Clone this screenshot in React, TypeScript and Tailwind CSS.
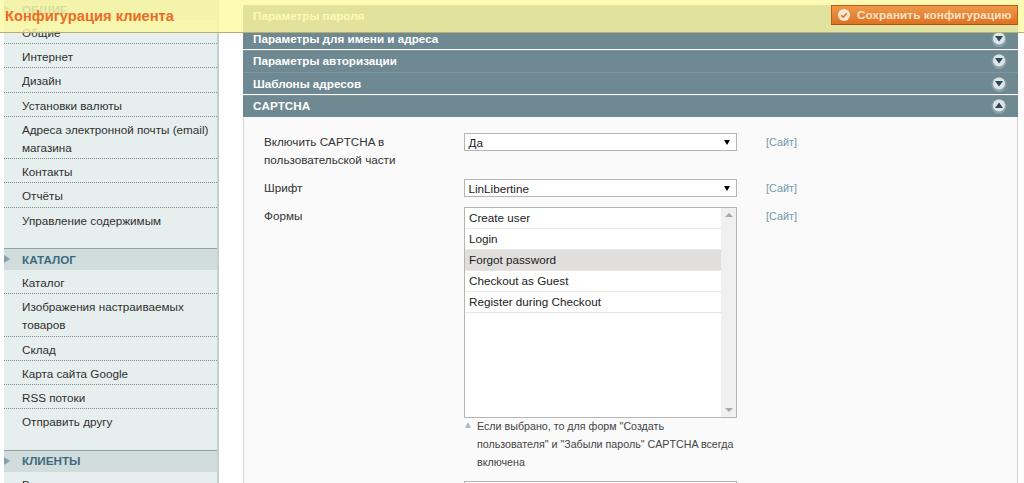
import React from "react";

const font = { fontFamily: '"Liberation Sans", Arial, sans-serif' };

function NavItem({ children, last }: { children: React.ReactNode; last?: boolean }) {
  return (
    <div className={`pl-[18px] pr-1 pt-[4px] pb-[1.25px] text-[11.7px] leading-[18px] text-[#2f2f2f] border-b ${last ? "border-transparent" : "border-dotted border-[#7f8b8b]"}`}>
      {children}
    </div>
  );
}

function NavHead({ children }: { children: React.ReactNode }) {
  return (
    <div className="h-[22px] flex items-center border-t border-[#8fa3a8] bg-[#d1dcdd] pl-[18px] relative">
      <span className="absolute left-0 top-[6px] w-0 h-0 border-y-[4.5px] border-y-transparent border-l-[6px] border-l-[#84a0a8]" />
      <span className="text-[11.7px] font-bold text-[#3e6a80]">{children}</span>
    </div>
  );
}

function Bar({ title, up }: { title: string; up?: boolean }) {
  return (
    <div className="h-[22px] mb-[0.5px] bg-[#6f8992] border-t border-[#7f96a0] flex items-center justify-between pl-[10px] pr-[11px]">
      <span className="text-[11.7px] font-bold text-white">{title}</span>
      <svg width="16" height="16" viewBox="0 0 16 16">
        <circle cx="8" cy="8.5" r="7.5" fill="#8ba0a8" />
        <circle cx="8" cy="7.5" r="6" fill="#dfe5e7" />
        {up ? <path d="M4 10 L12 10 L8 4.5 Z" fill="#264a5e" /> : <path d="M4 5 L12 5 L8 10.5 Z" fill="#264a5e" />}
      </svg>
    </div>
  );
}

function Select({ value }: { value: string }) {
  return (
    <div className="w-[273px] h-[18px] bg-white border border-[#b5b5b5] flex items-center justify-between pl-[3.5px] pr-[6px] text-[11.7px] text-[#222]">
      <span>{value}</span>
      <span className="w-0 h-0 border-x-[3.5px] border-x-transparent border-t-[5px] border-t-black" />
    </div>
  );
}

function Row({ label, scope, children, h }: { label: React.ReactNode; scope: string; children: React.ReactNode; h: string }) {
  return (
    <div className={`flex ${h}`}>
      <div className="w-[220px] pl-[20px] pr-[50px] text-[11.7px] leading-[18px] text-[#333]">{label}</div>
      <div className="w-[273px]">{children}</div>
      <div className="ml-[29px] mt-[3px] h-[12px] text-[10.8px] leading-[12px] text-[#6f98ad]">{scope}</div>
    </div>
  );
}

export default function App() {
  const opts = ["Create user", "Login", "Forgot password", "Checkout as Guest", "Register during Checkout"];
  return (
    <div style={font} className="relative w-[1024px] h-[483px] overflow-hidden bg-white flex">
      <div className="absolute left-0 top-0 z-10 w-full h-[33px] bg-[#fdf9a0]/80 border-b border-[#b8b06a] flex items-center justify-between pl-[5px] pr-[6px]">
        <span className="text-[14.7px] font-bold text-[#eb6d22]">Конфигурация клиента</span>
        <div className="h-[20px] w-[187px] flex items-center gap-[7px] pl-[6px] bg-gradient-to-b from-[#f0994a] to-[#dc7222] border border-[#c55a12] border-b-[#b24e0e] mb-[2px]">
          <svg width="12" height="12" viewBox="0 0 12 12">
            <circle cx="6" cy="6" r="6" fill="#fbe8d4" />
            <path d="M3.2 6.2 L5.2 8.2 L8.8 4.2" fill="none" stroke="#e0701a" strokeWidth="1.6" />
          </svg>
          <span className="text-[11.7px] font-bold text-[#fbe3c8] tracking-[0.1px]">Сохранить конфигурацию</span>
        </div>
      </div>

      <div className="w-[215px] ml-[4px] -mt-[1px] h-[490px] shrink-0 bg-[#e7efee] border-r-[2px] border-[#c4d1d1] overflow-hidden">
        <div className="h-[20.75px] flex items-center bg-[#d1dcdd] pl-[18px] relative">
          <span className="absolute left-0 top-[6px] w-0 h-0 border-y-[4.5px] border-y-transparent border-l-[6px] border-l-[#84a0a8]" />
          <span className="text-[11.7px] font-bold text-[#3e6a80]">ОБЩИЕ</span>
        </div>
        <NavItem>Общие</NavItem>
        <NavItem>Интернет</NavItem>
        <NavItem>Дизайн</NavItem>
        <NavItem>Установки валюты</NavItem>
        <NavItem>Адреса электронной почты (email) магазина</NavItem>
        <NavItem>Контакты</NavItem>
        <NavItem>Отчёты</NavItem>
        <NavItem last>Управление содержимым</NavItem>
        <div className="h-[16.25px]" />
        <NavHead>КАТАЛОГ</NavHead>
        <NavItem>Каталог</NavItem>
        <NavItem>Изображения настраиваемых товаров</NavItem>
        <NavItem>Склад</NavItem>
        <NavItem>Карта сайта Google</NavItem>
        <NavItem>RSS потоки</NavItem>
        <NavItem last>Отправить другу</NavItem>
        <div className="h-[16.25px]" />
        <NavHead>КЛИЕНТЫ</NavHead>
        <NavItem last>В</NavItem>
      </div>

      <div className="ml-[24px] w-[775px] pt-[4.7px] shrink-0">
        <Bar title="Параметры пароля" />
        <Bar title="Параметры для имени и адреса" />
        <Bar title="Параметры авторизации" />
        <Bar title="Шаблоны адресов" />
        <Bar title="CAPTCHA" up />
        <div className="h-[400px] bg-[#fafafa] border-x border-[#d6d6d6] pt-[16.2px]">
          <Row h="h-[46px]" label="Включить CAPTCHA в пользовательской части" scope="[Сайт]"><Select value="Да" /></Row>
          <Row h="h-[28px]" label="Шрифт" scope="[Сайт]"><Select value="LinLibertine" /></Row>
          <Row h="h-[280px]" label="Формы" scope="[Сайт]">
            <div className="w-[273px] h-[211px] border border-[#b5b5b5] bg-white flex">
              <div className="flex-1">
                {opts.map((o) => (
                  <div key={o} className={`h-[21px] pl-[4px] pb-[2px] flex items-center text-[11.7px] text-[#222] border-b border-[#e6e6e6] ${o === "Forgot password" ? "bg-[#e0dfdd]" : ""}`}>{o}</div>
                ))}
              </div>
              <div className="w-[15px] bg-[#f0f0f0] flex flex-col justify-between items-center py-[5px]">
                <span className="w-0 h-0 border-x-[4px] border-x-transparent border-b-[4px] border-b-[#a8a8a8]" />
                <span className="w-0 h-0 border-x-[4px] border-x-transparent border-t-[4px] border-t-[#a8a8a8]" />
              </div>
            </div>
            <div className="relative -mt-[1px] pl-[13px] text-[10.7px] leading-[18px] text-[#444]">
              <span className="absolute left-[1px] top-[5px] w-0 h-0 border-x-[3.5px] border-x-transparent border-b-[6px] border-b-[#a9bcc4]" />
              Если выбрано, то для форм "Создать пользователя" и "Забыли пароль" CAPTCHA всегда включена
            </div>
            <div className="w-[273px] h-[18px] mt-[10px] bg-white border border-[#b5b5b5]" />
          </Row>
        </div>
      </div>
    </div>
  );
}
